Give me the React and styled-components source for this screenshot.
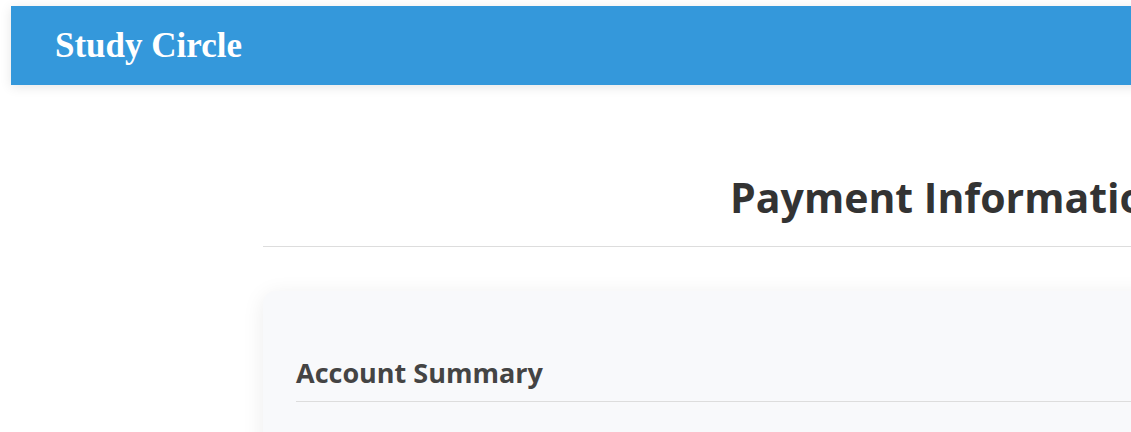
import React from "react";
import styled, { createGlobalStyle } from "styled-components";

const GlobalStyle = createGlobalStyle`
  *, *::before, *::after {
    box-sizing: border-box;
  }

  html {
    overflow: hidden;
  }

  body {
    margin: 0;
    background: #fff;
    color: #333;
    font-family: "Segoe UI", "Open Sans", sans-serif;
  }
`;

const Page = styled.div`
  min-width: 1902px;
  padding: 6px 11px;
`;

const Header = styled.header`
  display: flex;
  align-items: center;
  padding: 20px 44px;
  background: #3498db;
  box-shadow: 0 2px 11px rgba(0, 0, 0, 0.1);
`;

const Brand = styled.div`
  color: #fff;
  font-family: "Liberation Serif", serif;
  font-size: 35px;
  font-weight: 700;
  line-height: 39px;
`;

const Main = styled.main`
  max-width: 1376px;
  margin: 0 auto;
  padding-top: 82px;
`;

const Title = styled.h1`
  margin: 0 0 44px;
  padding-bottom: 19px;
  border-bottom: 1px solid #ddd;
  font-size: 41px;
  font-weight: 700;
  line-height: 60px;
  text-align: center;
`;

const Card = styled.section`
  min-height: 440px;
  padding: 62px 33px;
  border-radius: 13px;
  background: #f8f9fb;
  box-shadow: 0 4px 22px rgba(0, 0, 0, 0.08);
`;

const CardTitle = styled.h2`
  margin: 0;
  padding-bottom: 8px;
  border-bottom: 1px solid #ddd;
  color: #444;
  font-size: 27px;
  font-weight: 700;
  line-height: 40px;
`;

export default function App() {
  return (
    <>
      <GlobalStyle />
      <Page>
        <Header>
          <Brand>Study Circle</Brand>
        </Header>
        <Main>
          <Title>Payment Information</Title>
          <Card>
            <CardTitle>Account Summary</CardTitle>
          </Card>
        </Main>
      </Page>
    </>
  );
}
